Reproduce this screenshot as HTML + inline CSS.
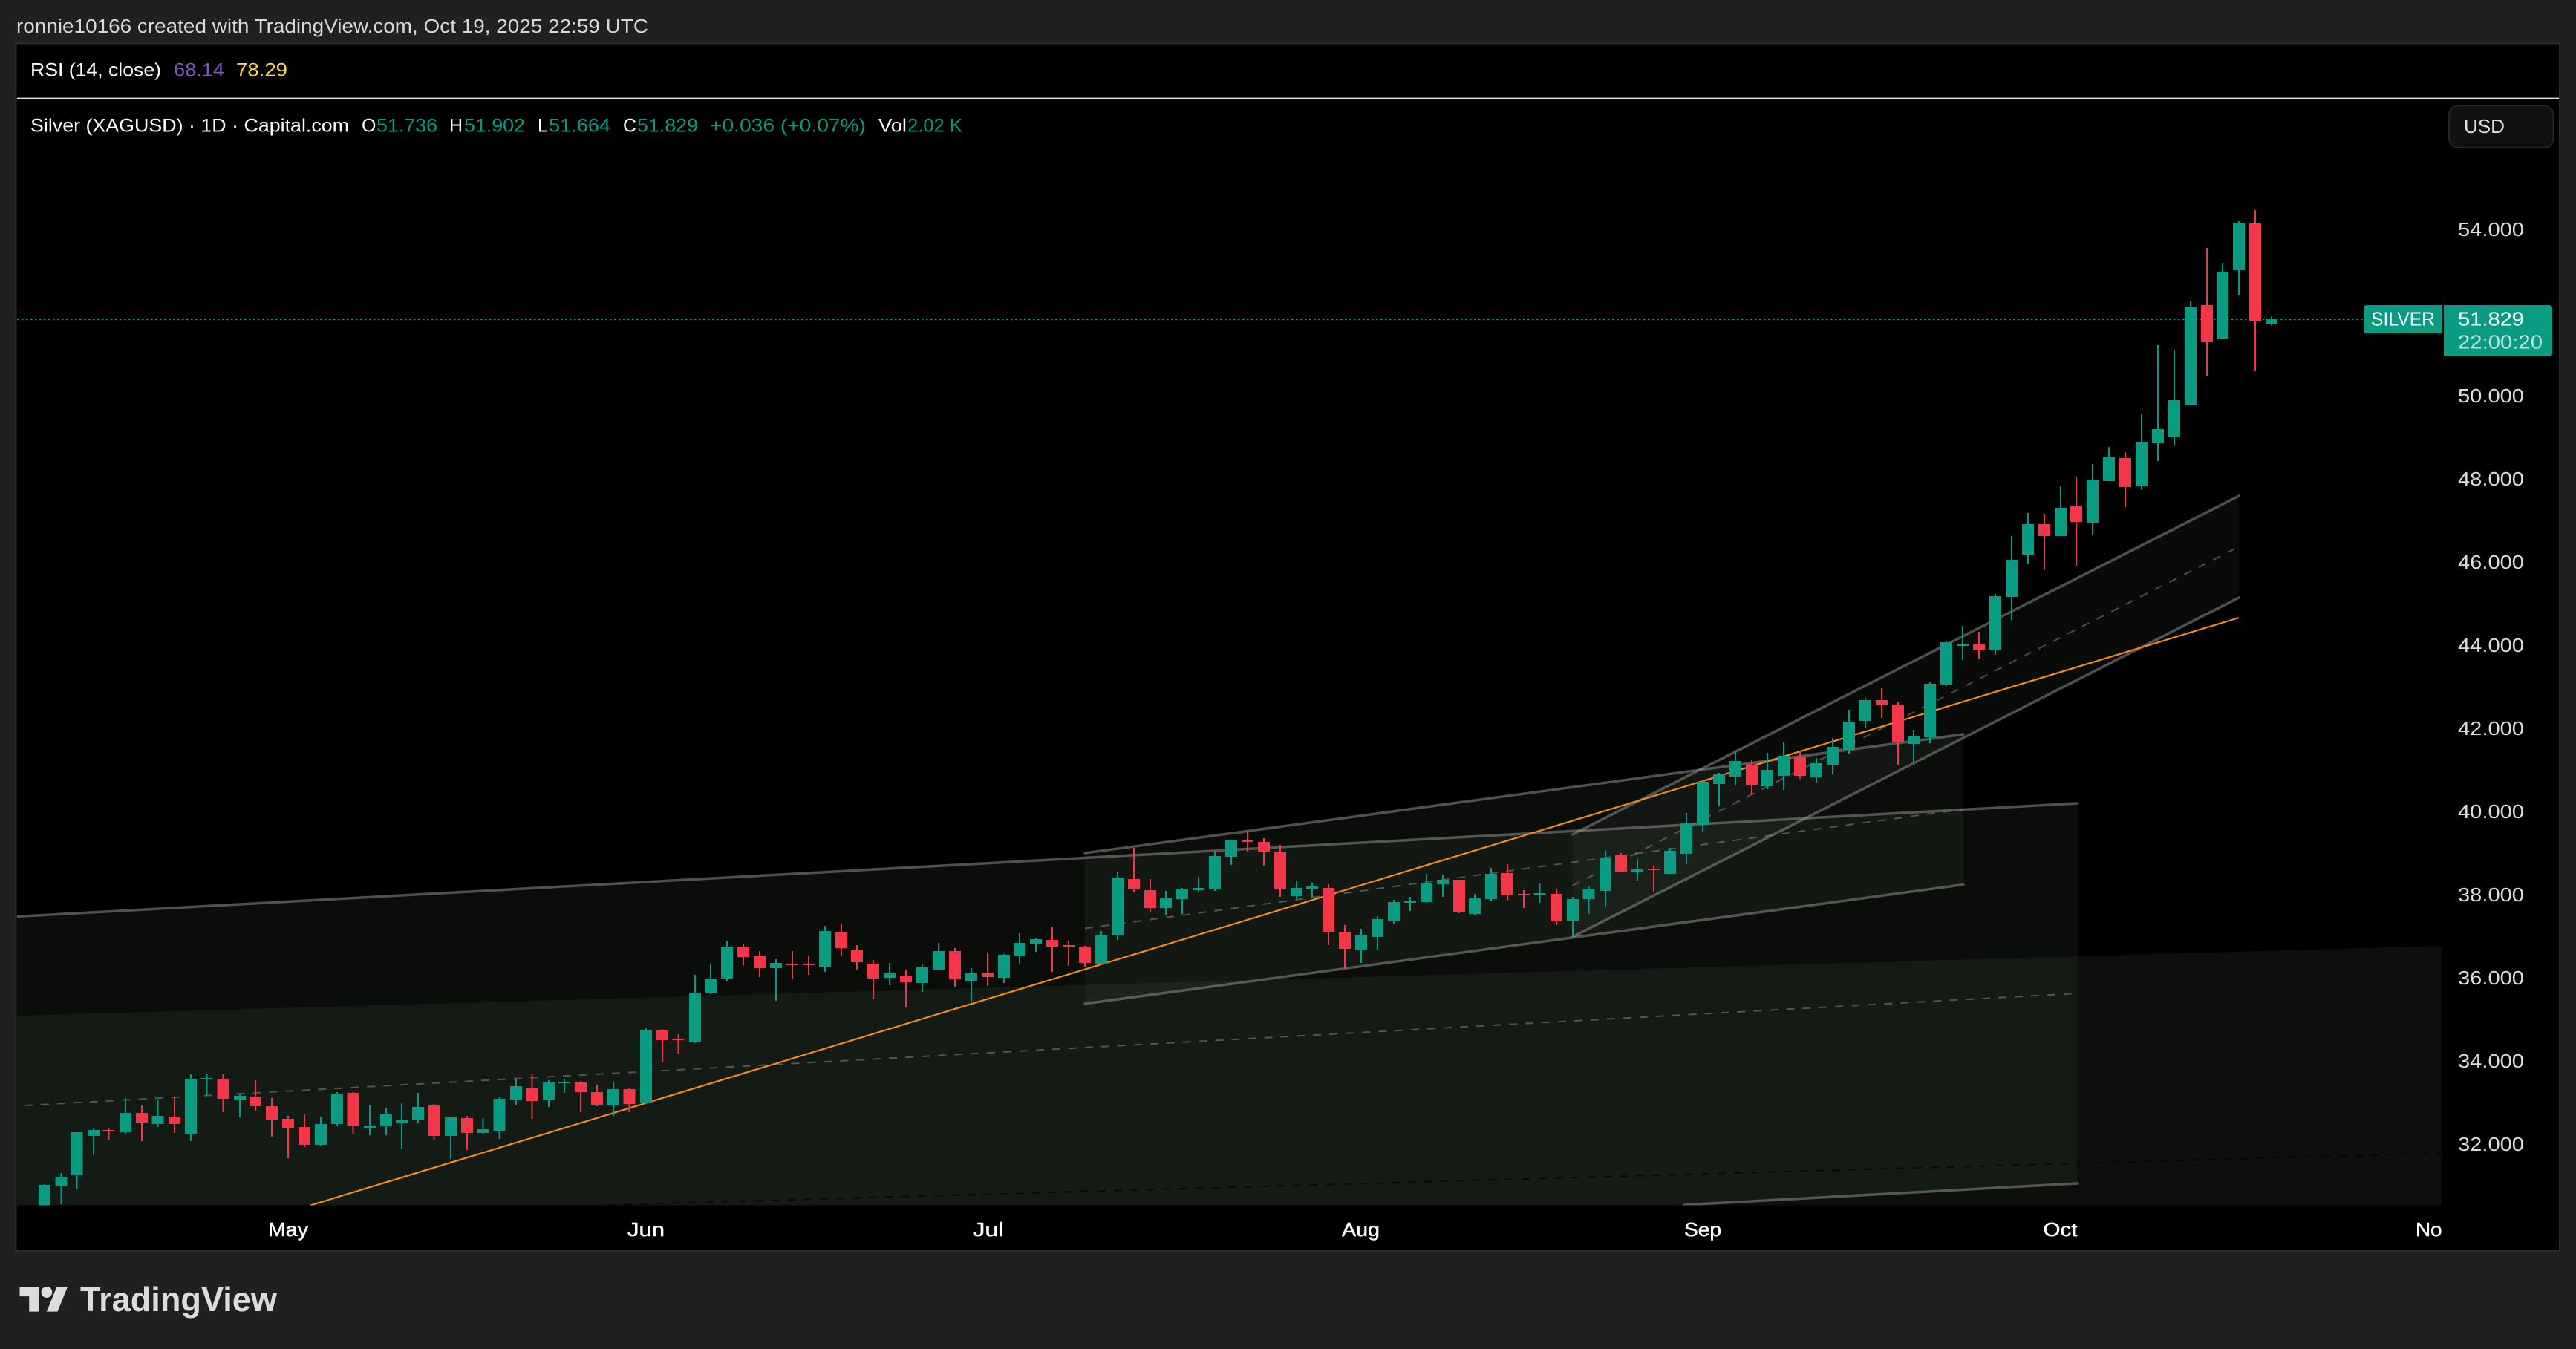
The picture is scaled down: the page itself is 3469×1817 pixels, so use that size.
<!DOCTYPE html>
<html lang="en">
<head>
<meta charset="utf-8">
<title>Silver (XAGUSD) chart</title>
<style>
html,body{margin:0;padding:0;background:#202020;width:3469px;height:1817px;overflow:hidden}
svg{display:block}
text{font-family:"Liberation Sans",sans-serif}
.nss{vector-effect:non-scaling-stroke;fill:none;shape-rendering:crispEdges}
.gw{stroke:#0a9c82;stroke-width:2}
.gb{stroke:#0a9c82;stroke-width:16}
.rw{stroke:#f33648;stroke-width:2}
.rb{stroke:#f33648;stroke-width:16}
.chan{stroke:#8e8e8a;stroke-opacity:.55;stroke-width:3.5;stroke-linecap:round;fill:none}
.mid{stroke:#a0a09c;stroke-opacity:.45;stroke-width:2;stroke-dasharray:11 11;fill:none}
.leg{font-size:25px;fill:#fff}
.num{font-size:25px;fill:#089981}
.ax{font-size:26px;fill:#dcdde0}
.tm{font-size:26px;fill:#fff;stroke:#fff;stroke-width:.5}
</style>
</head>
<body>
<svg xmlns="http://www.w3.org/2000/svg" width="3469" height="1817" viewBox="0 0 3469 1817">
<defs>
<clipPath id="plot"><rect x="23" y="135" width="3266" height="1488.5"/></clipPath>
</defs>
<rect width="3469" height="1817" fill="#202020"/>
<rect x="21.5" y="58.5" width="3425.5" height="1626.5" fill="#000" stroke="#2c2c2c" stroke-width="2"/>

<text x="22" y="44" font-size="25.5" fill="#d8d8d8" textLength="851" lengthAdjust="spacingAndGlyphs">ronnie10166 created with TradingView.com, Oct 19, 2025 22:59 UTC</text>

<text class="leg" x="41" y="102.5" textLength="176" lengthAdjust="spacingAndGlyphs">RSI (14, close)</text>
<text x="234" y="102.5" font-size="25" fill="#7e57c2" textLength="68" lengthAdjust="spacingAndGlyphs">68.14</text>
<text x="318" y="102.5" font-size="25" fill="#fdd835" textLength="69" lengthAdjust="spacingAndGlyphs">78.29</text>

<rect x="23" y="131.6" width="3423" height="2.3" fill="#e0e3eb"/>

<g clip-path="url(#plot)">
<polygon points="22,1234.5 2798,1082 2798,1594 2268,1623.5 22,1623.5" fill="#607860" fill-opacity=".105"/>
<polygon points="22,1368 3289,1274 3289,1623.5 22,1623.5" fill="#607860" fill-opacity=".12"/>
<polygon points="1461,1149 2644,989 2644,1191.5 1461,1352" fill="#607860" fill-opacity=".11"/>
<polygon points="2117.5,1124 3015,668 3015,805 2117.5,1262" fill="#607860" fill-opacity=".09"/>

<line x1="818" y1="1623" x2="3289" y2="1553" stroke="#000" stroke-opacity=".65" stroke-width="2" stroke-dasharray="11 11"/>
<line class="mid" x1="33" y1="1489" x2="2790" y2="1338.4"/>
<line class="mid" x1="1461" y1="1250.5" x2="2644" y2="1090"/>
<line class="mid" x1="2117.5" y1="1193" x2="3012" y2="738"/>

<line class="chan" x1="22" y1="1234.5" x2="2798" y2="1082"/>
<line class="chan" x1="2268" y1="1623" x2="2798" y2="1594"/>
<line class="chan" x1="1461" y1="1149" x2="2644" y2="989"/>
<line class="chan" x1="1461" y1="1352" x2="2644" y2="1191.5"/>
<line class="chan" x1="2117.5" y1="1124" x2="3015" y2="668"/>
<line class="chan" x1="2117.5" y1="1262" x2="3015" y2="805"/>

<line x1="418" y1="1623.5" x2="3015" y2="832" stroke="#f58a1f" stroke-width="2.2"/>

<line x1="23" y1="430" x2="3183" y2="430" stroke="#0a9c82" stroke-width="2" stroke-dasharray="2.5 3.5"/>

<g transform="translate(0 1200) scale(.60587 .33333)">
<path class="nss gw" d="M99 1185V1272M136 1140V1266M171 975V1206M208 957V1068M279 837V981M351 843V954M424 741V1011M460 741V828M533 822V915M713 912V1029M749 813V951M822 864V987M858 879V987M893 858V1044M929 816V939M1002 915V1083M1074 918V984M1110 834V1002M1147 759V867M1220 765V873M1254 759V816M1363 771V909M1436 555V861M1545 339V615"/>
<path class="nss gb" d="M99 1188V1272M136 1158V1194M171 975V1149M208 966V990M279 897V975M351 909V942M424 759V981M460 756V762M533 828V843M713 942V1026M749 819V942M822 948V960M858 900V951M893 924V939M929 873V924M1002 915V990M1074 963V978M1110 840V969M1147 789V843M1220 774V846M1254 771V777M1363 801V867M1436 561V855M1545 411V612"/>
<path class="nss rw" d="M62 1270V1272M242 957V1008M315 867V1011M388 831V978M496 741V894M568 765V888M604 837V993M640 909V1080M677 903V1035M785 813V981M965 861V1008M1038 909V1047M1183 738V921M1291 768V894M1327 783V870M1399 798V894M1472 558V693M1508 579V657"/>
<path class="nss rb" d="M242 966V972M315 897V936M388 912V942M496 759V840M568 831V870M604 870V924M640 921V957M677 954V1026M785 816V948M965 867V990M1038 918V978M1183 798V849M1291 774V813M1327 813V864M1399 801V861M1472 564V603M1508 597V603"/>
</g>

<g transform="translate(850 1100) scale(.44643 .33333)">
<path class="nss gw" d="M240 594V717M289 504V666M437 576V744M585 441V627M779 591V681M878 597V708M927 510V618M1026 612V750M1124 555V672M1171 471V594M1221 489V546"/>
<path class="nss gb" d="M240 657V714M289 525V654M437 591V612M585 462V606M779 633V651M878 609V672M927 543V618M1026 633V663M1124 558V651M1171 510V564M1221 495V516"/>
<path class="nss rw" d="M338 513V600M387 543V648M486 543V657M535 561V639M634 432V564M681 519V618M730 579V735M829 618V771M977 531V687M1075 549V684M1270 444V627M1319 504V603"/>
<path class="nss rb" d="M338 525V567M387 561V612M486 594V600M535 594V600M634 465V531M681 537V588M730 594V654M829 642V669M977 543V657M1075 633V648M1270 498V525M1319 519V525"/>
</g>

<g transform="translate(1450 1080) scale(.44643 .33333)">
<path class="nss gw" d="M74 522V654M123 285V558M269 360V459M318 348V453M367 303V366M417 198V360M466 153V255M663 318V396M710 327V390M858 513V651M907 462V597M956 396V492M1006 384V441M1055 291V408M1104 294V384M1201 372V459M1250 267V402M1397 330V408M1496 384V552M1545 342V453"/>
<path class="nss gb" d="M74 540V654M123 306V540M269 390V429M318 354V393M367 348V357M417 219V354M466 156V222M663 348V381M710 342V354M858 537V600M907 474V546M956 405V480M1006 402V408M1055 330V405M1104 315V333M1201 390V453M1250 291V393M1397 369V375M1496 393V480M1545 351V393"/>
<path class="nss rw" d="M25 582V666M172 186V363M222 312V444M515 117V201M564 147V258M614 174V384M759 333V579M809 498V675M1154 315V450M1299 252V402M1348 357V429M1447 351V498"/>
<path class="nss rb" d="M25 588V651M172 312V354M222 357V429M515 156V162M564 162V201M614 204V351M759 348V525M809 525V594M1154 315V444M1299 288V375M1348 372V378M1447 372V483"/>
</g>

<g transform="translate(2080 1000) scale(.38265 .33333)">
<path class="nss gw" d="M214 438V666M327 471V558M442 426V531"/>
<path class="nss gb" d="M214 468V600M327 513V525M442 438V531"/>
<path class="nss rw" d="M269 447V525M384 498V603"/>
<path class="nss rb" d="M269 456V522M384 510V516"/>
</g>

<g transform="translate(2250 820) scale(.33333 .33333)">
<path class="nss gw" d="M63 825V1032M129 693V900M195 663V798M261 573V714M390 582V729M456 540V732M588 603V702M654 522V669M720 408V585M786 360V483M981 489V621M1047 297V543M1113 129V312M1179 69V207"/>
<path class="nss gb" d="M63 867V990M129 699V873M195 669V708M261 615V678M390 651V717M456 594V675M588 624V681M654 558V630M720 456V570M786 369V453M981 513V546M1047 303V519M1113 135V306M1179 141V150"/>
<path class="nss rw" d="M327 612V753M522 573V687M852 321V441M918 378V630M1245 93V204"/>
<path class="nss rb" d="M327 628V711M522 597V675M852 369V390M918 390V540M1245 144V165"/>
</g>

<g transform="translate(2680 250) scale(.33333 .38265)">
<path class="nss gw" d="M21 1437V1651M87 1233V1530M153 1152V1332M285 1058V1233M414 980V1230M480 920V1040M612 805V1070M678 562V969M744 578V916M810 408V774M939 272V538M1005 125V384M1137 461V493"/>
<path class="nss gb" d="M21 1445V1633M87 1317V1448M153 1192V1299M285 1134V1233M414 1035V1186M480 956V1040M612 902V1058M678 857V907M744 755V886M810 426V774M939 303V538M1005 131V295M1137 470V486"/>
<path class="nss rw" d="M219 1155V1353M348 1027V1338M546 938V1131M876 220V671M1071 86V653"/>
<path class="nss rb" d="M219 1192V1233M348 1129V1184M546 959V1061M876 421V549M1071 133V477"/>
</g>
</g>

<text class="leg" x="41" y="177.5" textLength="429" lengthAdjust="spacingAndGlyphs">Silver (XAGUSD) · 1D · Capital.com</text>
<text class="leg" x="487" y="177.5">O</text>
<text class="num" x="507" y="177.5" textLength="82" lengthAdjust="spacingAndGlyphs">51.736</text>
<text class="leg" x="605" y="177.5">H</text>
<text class="num" x="625" y="177.5" textLength="82" lengthAdjust="spacingAndGlyphs">51.902</text>
<text class="leg" x="724" y="177.5">L</text>
<text class="num" x="739" y="177.5" textLength="83" lengthAdjust="spacingAndGlyphs">51.664</text>
<text class="leg" x="839" y="177.5">C</text>
<text class="num" x="858" y="177.5" textLength="82" lengthAdjust="spacingAndGlyphs">51.829</text>
<text class="num" x="956" y="177.5" textLength="210" lengthAdjust="spacingAndGlyphs">+0.036 (+0.07%)</text>
<text class="leg" x="1183" y="177.5" textLength="38" lengthAdjust="spacingAndGlyphs">Vol</text>
<text class="num" x="1222" y="177.5" textLength="74" lengthAdjust="spacingAndGlyphs">2.02 K</text>

<rect x="3298" y="142.5" width="140.5" height="56.5" rx="12" fill="#111" stroke="#2c2c2c" stroke-width="1.5"/>
<text x="3318" y="179" font-size="26" fill="#dcdde0" textLength="55" lengthAdjust="spacingAndGlyphs">USD</text>

<text class="ax" x="3310" y="318" textLength="89" lengthAdjust="spacingAndGlyphs">54.000</text>
<text class="ax" x="3310" y="542" textLength="89" lengthAdjust="spacingAndGlyphs">50.000</text>
<text class="ax" x="3310" y="654" textLength="89" lengthAdjust="spacingAndGlyphs">48.000</text>
<text class="ax" x="3310" y="766" textLength="89" lengthAdjust="spacingAndGlyphs">46.000</text>
<text class="ax" x="3310" y="878" textLength="89" lengthAdjust="spacingAndGlyphs">44.000</text>
<text class="ax" x="3310" y="990" textLength="89" lengthAdjust="spacingAndGlyphs">42.000</text>
<text class="ax" x="3310" y="1102" textLength="89" lengthAdjust="spacingAndGlyphs">40.000</text>
<text class="ax" x="3310" y="1214" textLength="89" lengthAdjust="spacingAndGlyphs">38.000</text>
<text class="ax" x="3310" y="1326" textLength="89" lengthAdjust="spacingAndGlyphs">36.000</text>
<text class="ax" x="3310" y="1438" textLength="89" lengthAdjust="spacingAndGlyphs">34.000</text>
<text class="ax" x="3310" y="1550" textLength="89" lengthAdjust="spacingAndGlyphs">32.000</text>

<path d="M3187 411H3289V449H3187a4 4 0 0 1-4-4V415a4 4 0 0 1 4-4Z" fill="#0a9c82"/>
<text x="3193" y="438.5" font-size="26" fill="#fff" textLength="86" lengthAdjust="spacingAndGlyphs">SILVER</text>
<path d="M3291 411H3433a4 4 0 0 1 4 4V476a4 4 0 0 1-4 4H3291Z" fill="#0a9c82"/>
<text x="3310" y="438.5" font-size="26" fill="#fff" textLength="89" lengthAdjust="spacingAndGlyphs">51.829</text>
<text x="3310" y="469.5" font-size="26" fill="#fff" fill-opacity=".72" textLength="114" lengthAdjust="spacingAndGlyphs">22:00:20</text>

<text class="tm" x="361" y="1665" textLength="54" lengthAdjust="spacingAndGlyphs">May</text>
<text class="tm" x="845" y="1665" textLength="50" lengthAdjust="spacingAndGlyphs">Jun</text>
<text class="tm" x="1310" y="1665" textLength="42" lengthAdjust="spacingAndGlyphs">Jul</text>
<text class="tm" x="1807" y="1665" textLength="51" lengthAdjust="spacingAndGlyphs">Aug</text>
<text class="tm" x="2268" y="1665" textLength="50" lengthAdjust="spacingAndGlyphs">Sep</text>
<text class="tm" x="2751.5" y="1665" textLength="46" lengthAdjust="spacingAndGlyphs">Oct</text>
<text class="tm" x="3253" y="1665" textLength="35.5" lengthAdjust="spacingAndGlyphs">No</text>

<g transform="translate(26.5 1725.5) scale(1.82 1.87)" fill="#dcdcdc">
<path d="M14 22H7V11H0V4h14v18zM28 22h-8l7.5-18h8L28 22z"/>
<circle cx="20" cy="8" r="4"/>
</g>
<text x="108" y="1766" font-size="46" font-weight="700" fill="#dcdcdc" textLength="265" lengthAdjust="spacingAndGlyphs">TradingView</text>
</svg>
</body>
</html>
